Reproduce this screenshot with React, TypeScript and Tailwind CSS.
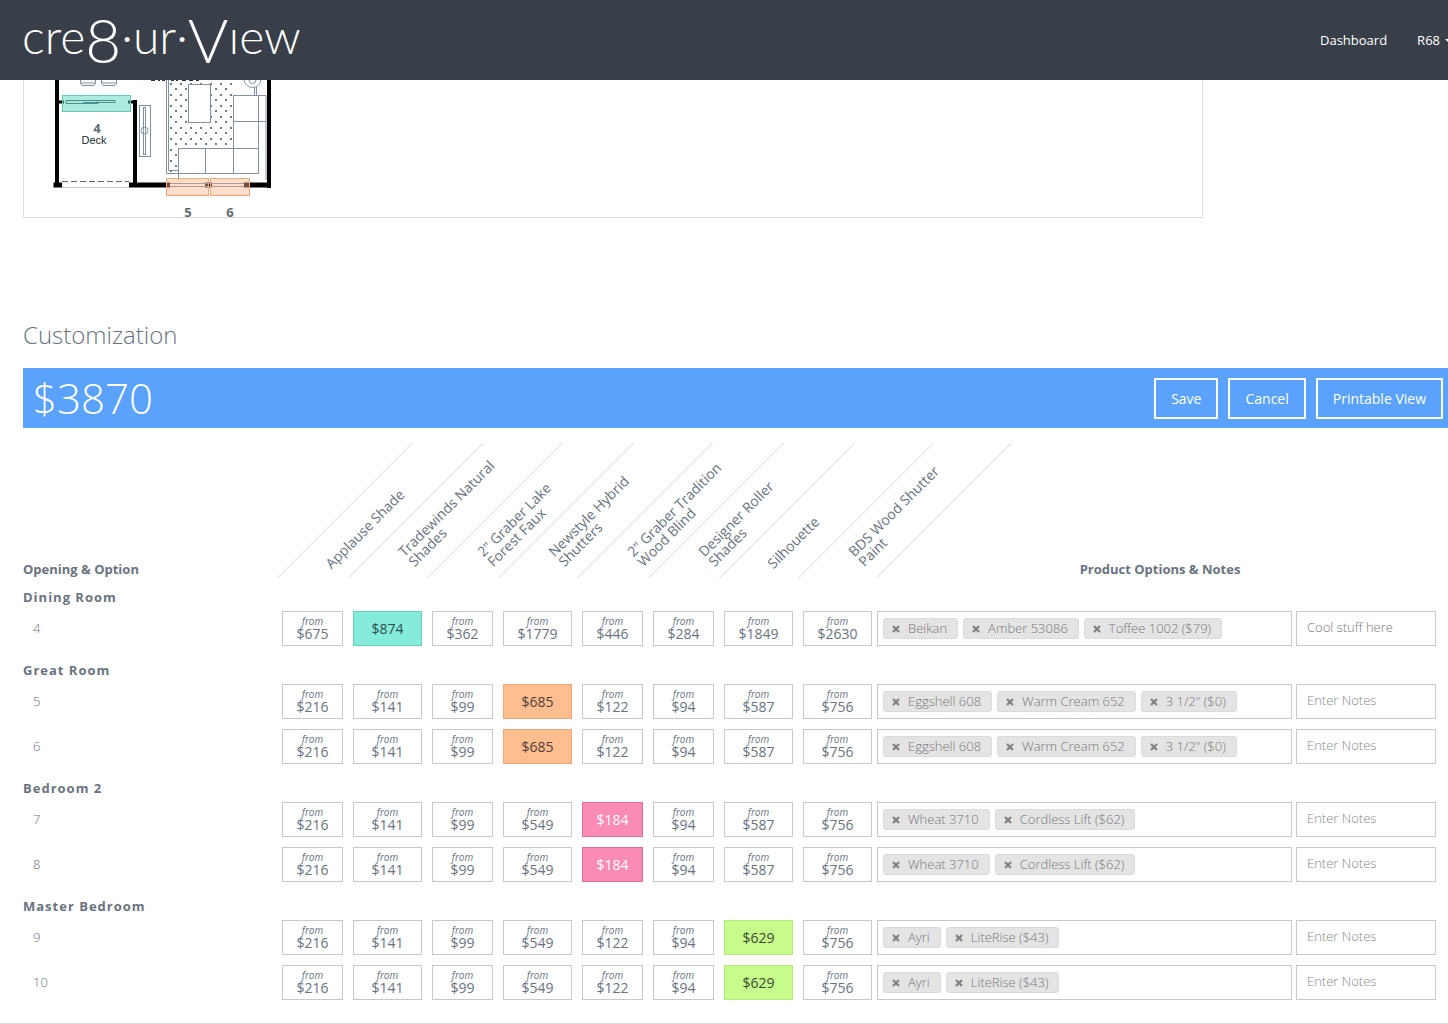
import React from "react";

type Group = { room: string; rows: Row[] };
type Row = { id: string; prices: number[]; picked: number; tags: string[]; notes?: string };

const products: { lines: string[]; width: string }[] = [
  { lines: ["Applause Shade"], width: "w-[71px]" },
  { lines: ["Tradewinds Natural", "Shades"], width: "w-[79px]" },
  { lines: ['2" Graber Lake', "Forest Faux"], width: "w-[71px]" },
  { lines: ["Newstyle Hybrid", "Shutters"], width: "w-[79px]" },
  { lines: ['2" Graber Tradition', "Wood Blind"], width: "w-[71px]" },
  { lines: ["Designer Roller", "Shades"], width: "w-[71px]" },
  { lines: ["Silhouette"], width: "w-[79px]" },
  { lines: ["BDS Wood Shutter", "Paint"], width: "w-[79px]" },
];

const pickedStyle: Record<number, string> = {
  1: "border-[#6ccdbd] bg-[#85ecdb] text-[#2f4f4d]",
  3: "border-[#f0a878] bg-[#ffbd90] text-[#4f4038]",
  4: "border-[#dd6f9c] bg-[#f98bb5] text-white",
  6: "border-[#b4e87c] bg-[#c7fb8c] text-[#3c4a30]",
};

const great = [216, 141, 99, 685, 122, 94, 587, 756];
const bedroom = [216, 141, 99, 549, 184, 94, 587, 756];
const master = [216, 141, 99, 549, 122, 94, 629, 756];
const greatTags = ["Eggshell 608", "Warm Cream 652", '3 1/2" ($0)'];
const bedroomTags = ["Wheat 3710", "Cordless Lift ($62)"];
const masterTags = ["Ayri", "LiteRise ($43)"];

const groups: Group[] = [
  {
    room: "Dining Room",
    rows: [
      {
        id: "4",
        prices: [675, 874, 362, 1779, 446, 284, 1849, 2630],
        picked: 1,
        tags: ["Beikan", "Amber 53086", "Toffee 1002 ($79)"],
        notes: "Cool stuff here",
      },
    ],
  },
  {
    room: "Great Room",
    rows: [
      { id: "5", prices: great, picked: 3, tags: greatTags },
      { id: "6", prices: great, picked: 3, tags: greatTags },
    ],
  },
  {
    room: "Bedroom 2",
    rows: [
      { id: "7", prices: bedroom, picked: 4, tags: bedroomTags },
      { id: "8", prices: bedroom, picked: 4, tags: bedroomTags },
    ],
  },
  {
    room: "Master Bedroom",
    rows: [
      { id: "9", prices: master, picked: 6, tags: masterTags },
      { id: "10", prices: master, picked: 6, tags: masterTags },
    ],
  },
];

function Header() {
  return (
    <header className="flex h-20 items-center justify-between bg-[#383f49] pl-[22px] text-white">
      <a
        href="#"
        aria-label="cre8·ur·View"
        className="flex items-baseline pb-5 font-['Lato',sans-serif] text-[48px] leading-none font-light"
      >
        <span>cre</span>
        <span className="relative top-[9px] text-[62px] leading-none">8</span>
        <span>·ur·</span>
        <span className="relative top-[9px] text-[62px] leading-none">V</span>
        <span>ıew</span>
      </a>
      <nav className="-mr-[5px] flex items-center gap-[30px] pt-[2px] text-[13px]">
        <a href="#">Dashboard</a>
        <button type="button" className="flex items-center gap-[5px]">
          R68
          <span className="border-x-4 border-t-4 border-x-transparent border-t-white" />
        </button>
      </nav>
    </header>
  );
}

function FloorPlan() {
  return (
    <svg
      width="270"
      height="144"
      viewBox="24 80 270 144"
      fill="none"
      className="block font-['Open_Sans',sans-serif]"
      role="img"
      aria-label="Floor plan"
    >
      <defs>
        <pattern id="rug" width="10" height="11" patternUnits="userSpaceOnUse" x="169" y="81">
          <circle cx="2" cy="3" r="0.9" fill="#2f3a49" />
          <circle cx="7" cy="8" r="0.9" fill="#2f3a49" />
        </pattern>
      </defs>
      <path d="M168 80H232V146H178V172H168Z" fill="url(#rug)" />
      <path d="M151 80h4m3 0h2m2 0h3m6 0h3m2 0h2m4 0h4m3 0h4m3 0h3" stroke="#2b3038" strokeWidth="2" />
      <g stroke="#8292a5">
        <path d="M80.500 80V83L82 85.500H94L95.500 83V80M101.500 80V83L103 85.500H115L116.500 83V80M81 83H95M102 83H116" />
        <path d="M166.500 80V173.500H258.500V95M168.500 80V170.500H178M178.500 180V148.500H258M205.500 148V173M233.500 95V173M233 95.500H266V180M233 121.500H266M254.500 87V95M256.500 87V95" />
        <rect x="188.500" y="84.500" width="22" height="38" fill="#fff" />
        <circle cx="252.500" cy="79" r="8.500" fill="#fff" />
        <circle cx="252.500" cy="80" r="3.500" />
        <rect x="139.500" y="105.500" width="11" height="51" />
        <rect x="143.500" y="107.500" width="2" height="47" />
        <circle cx="144.500" cy="130.500" r="3.500" />
      </g>
      <path d="M57 80V184M269 80V188M135 100V187" stroke="#000" strokeWidth="4" />
      <path d="M58 102H64M128 102H137" stroke="#000" strokeWidth="3" />
      <path d="M53.500 185H62M129 185H170M205 185H212M244 185H271" stroke="#000" strokeWidth="5" />
      <path d="M62 181.500H129" stroke="#596579" strokeDasharray="6 3" />
      <path d="M62 187.500H129" stroke="#c2c8d0" />
      <path d="M170 183.500H244M170 186.500H244" stroke="#718096" />
      <rect x="62.500" y="95.500" width="68" height="16" fill="#5ed8c0" fillOpacity="0.5" stroke="#69c8b6" />
      <path d="M66 100.500H98V103.500H66ZM83 100.500H115V102.500H83" stroke="#4a918c" />
      <rect x="166.500" y="178.500" width="42" height="17" fill="#ffb98c" fillOpacity="0.45" stroke="#f2a778" />
      <rect x="210.500" y="178.500" width="39" height="17" fill="#ffb98c" fillOpacity="0.45" stroke="#f2a778" />
      <g textAnchor="middle" className="fill-[#626a76] text-[13px] font-bold">
        <text x="97" y="133">4</text>
        <text x="188" y="217">5</text>
        <text x="230" y="217">6</text>
      </g>
      <text x="94" y="144" textAnchor="middle" className="fill-[#202a36] font-['Liberation_Sans',sans-serif] text-[11px]">
        Deck
      </text>
    </svg>
  );
}

function TotalBar() {
  return (
    <div className="flex h-[60px] items-center justify-between bg-[#5aa2fc] pr-[5px] pl-[10px] text-white">
      <strong className="text-[42px] leading-none font-light">$3870</strong>
      <div className="flex gap-[10px]">
        {["Save", "Cancel", "Printable View"].map((label) => (
          <button key={label} type="button" className="h-[41px] border-2 border-white px-[15px] pt-px text-sm">
            {label}
          </button>
        ))}
      </div>
    </div>
  );
}

function SlantedHeading({ lines, last }: { lines: string[]; last: boolean }) {
  const place = lines.length > 1 ? "bottom-[5px] left-[58px]" : "-bottom-[2px] left-[51px]";
  return (
    <div className="relative h-[135px]">
      <div
        className={`absolute inset-0 origin-bottom -skew-x-45 border-l border-[#d3d3d3] ${last ? "border-r" : ""}`}
      />
      <div
        className={`absolute flex h-7 w-40 origin-left -rotate-45 flex-col justify-center text-left text-sm leading-[14px] font-normal ${place}`}
      >
        {lines.map((line) => (
          <span key={line}>{line}</span>
        ))}
      </div>
    </div>
  );
}

function Tag({ label }: { label: string }) {
  return (
    <li className="flex h-[21px] items-center gap-2 rounded-[3px] border border-[#dadada] bg-[#e4e4e4] pr-[10px] pl-2">
      <button type="button" aria-label={`Remove ${label}`} className="text-[#808080]">
        <svg width="8" height="8" viewBox="0 0 8 8" stroke="currentColor" strokeWidth="2.200">
          <path d="M1 1L7 7M7 1L1 7" />
        </svg>
      </button>
      <span className="whitespace-nowrap">{label}</span>
    </li>
  );
}

function OptionRow({ row }: { row: Row }) {
  return (
    <tr className="h-[45px]">
      <td className="pl-[10px] text-[13px] font-light">{row.id}</td>
      {row.prices.map((price, i) => (
        <td key={i} className="px-[5px]">
          <button
            type="button"
            aria-pressed={i === row.picked}
            className={`flex h-[35px] w-full flex-col items-center justify-center border text-sm leading-[14px] ${
              i === row.picked ? pickedStyle[i] : "border-[#c8c8c8] bg-white pb-[2px]"
            }`}
          >
            {i !== row.picked && <em className="text-[10px] leading-3">from</em>}
            <span>${price}</span>
          </button>
        </td>
      ))}
      <td className="pr-[7px]">
        <div className="flex gap-1 text-[13px] font-light text-[#777]">
          <ul className="flex h-[35px] flex-1 items-center gap-[5px] border border-[#c8c8c8] pl-[5px]">
            {row.tags.map((tag) => (
              <Tag key={tag} label={tag} />
            ))}
          </ul>
          <input
            type="text"
            aria-label={`Notes for opening ${row.id}`}
            placeholder="Enter Notes"
            defaultValue={row.notes}
            className="h-[35px] w-[140px] border border-[#c8c8c8] px-[10px] pb-1 placeholder:text-[#888]"
          />
        </div>
      </td>
    </tr>
  );
}

export default function App() {
  return (
    <div className="overflow-x-hidden bg-white font-['Open_Sans',sans-serif] text-[#6a737f]">
      <Header />
      <main>
        <section className="ml-[23px] max-w-[1180px] border border-t-0 border-[#ddd]">
          <div className="h-[137px]">
            <FloorPlan />
          </div>
        </section>
        <section className="mt-[101px] border-b border-[#ddd] pb-[18px] pl-[23px]">
          <h2 className="mb-[17px] text-2xl leading-8 font-light">Customization</h2>
          <TotalBar />
          <div className="mt-[15px] pr-[5px]">
            <table className="w-full table-fixed border-collapse">
              <thead>
                <tr className="text-[13px] leading-[18px]">
                  <th scope="col" className="w-[254px] text-left align-bottom font-bold">
                    Opening &amp; Option
                  </th>
                  {products.map((product, i) => (
                    <th key={i} scope="col" className={product.width}>
                      <SlantedHeading lines={product.lines} last={i === products.length - 1} />
                    </th>
                  ))}
                  <th scope="col" className="text-center align-bottom font-bold">
                    Product Options &amp; Notes
                  </th>
                </tr>
              </thead>
              {groups.map((group) => (
                <tbody key={group.room}>
                  <tr className="h-7">
                    <th
                      scope="rowgroup"
                      colSpan={10}
                      className="pt-[10px] text-left text-[13px] leading-[18px] font-bold tracking-[1px]"
                    >
                      {group.room}
                    </th>
                  </tr>
                  {group.rows.map((row) => (
                    <OptionRow key={row.id} row={row} />
                  ))}
                </tbody>
              ))}
            </table>
          </div>
        </section>
      </main>
    </div>
  );
}
